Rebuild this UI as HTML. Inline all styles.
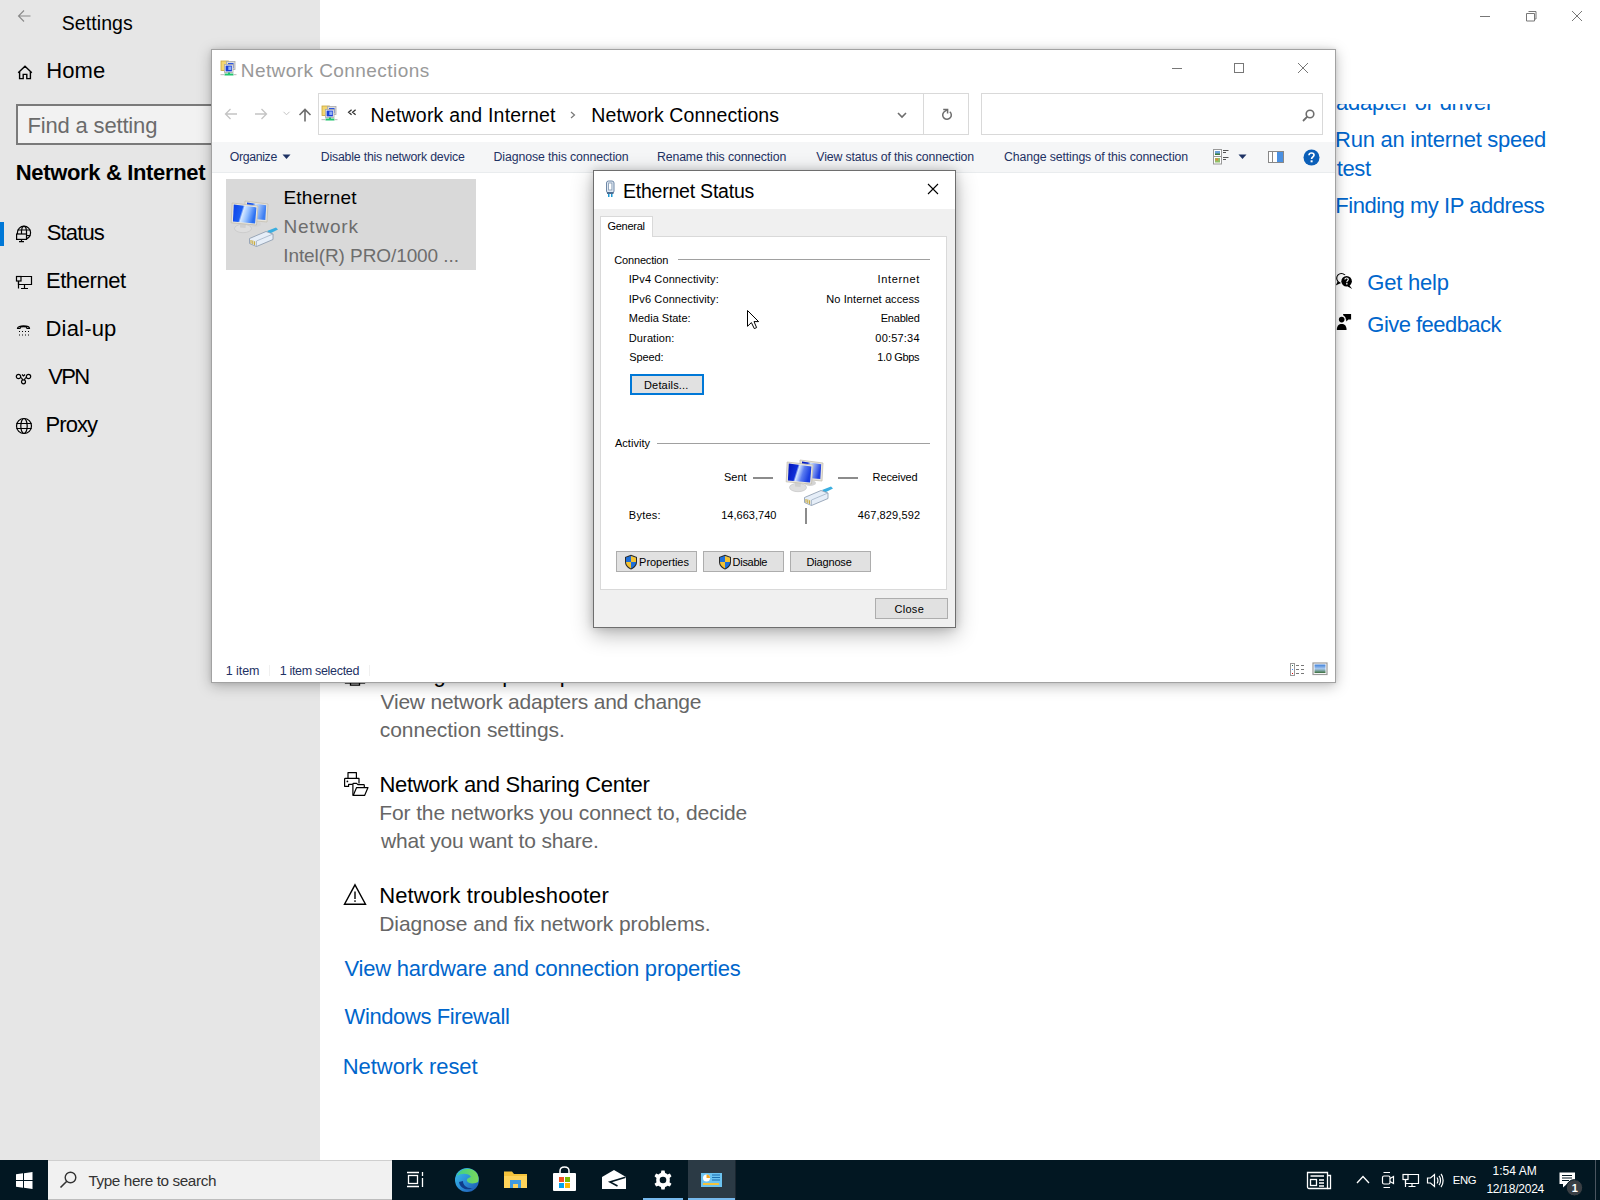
<!DOCTYPE html>
<html><head><meta charset="utf-8"><style>
html,body{margin:0;padding:0;}
body{width:1600px;height:1200px;position:relative;overflow:hidden;background:#fff;font-family:"Liberation Sans",sans-serif;color:#000;}
.t{position:absolute;white-space:nowrap;line-height:1;}
svg{overflow:visible;}
</style></head><body>
<div style="position:absolute;left:0px;top:0px;width:320px;height:1160px;background:#e6e6e6;"></div>
<div style="position:absolute;left:320px;top:0px;width:1280px;height:1160px;background:#fff;"></div>
<svg style="position:absolute;left:17px;top:9px;" width="15" height="14" viewBox="0 0 15 14"><path d="M13.5 7H1.5M7 1.5L1.5 7L7 12.5" fill="none" stroke="#8a8a8a" stroke-width="1.1"/></svg>
<div class="t" style="left:61.72px;top:14px;font-size:19.50px;letter-spacing:0.089px;">Settings</div>
<div style="position:absolute;left:1480px;top:16px;width:10px;height:1px;background:#777;"></div>
<svg style="position:absolute;left:1525px;top:10px;" width="13" height="13" viewBox="0 0 13 13"><path d="M3.5 1.5H11V9H9.5M1.5 3.5H9.5V11H1.5Z" fill="none" stroke="#777" stroke-width="1"/></svg>
<svg style="position:absolute;left:1571px;top:10px;" width="12" height="12" viewBox="0 0 12 12"><path d="M1 1L11 11M11 1L1 11" stroke="#777" stroke-width="1"/></svg>
<svg style="position:absolute;left:17px;top:65px;" width="16" height="15" viewBox="0 0 16 15"><path d="M1.2 7.8L8 1.2L14.8 7.8M2.6 6.6V13.6H6.2V9.4H9.8V13.6H13.4V6.6" fill="none" stroke="#000" stroke-width="1.4"/></svg>
<div class="t" style="left:46.30px;top:60px;font-size:22.00px;letter-spacing:0.099px;">Home</div>
<div style="position:absolute;left:16px;top:104px;width:300px;height:41px;background:#f2f2f2;border:2px solid #7a7a7a;box-sizing:border-box;"></div>
<div class="t" style="left:27.40px;top:115px;font-size:22.00px;letter-spacing:-0.158px;color:#6b6b6b;">Find a setting</div>
<div class="t" style="left:15.75px;top:162px;font-size:22.00px;letter-spacing:-0.345px;font-weight:bold;">Network &amp; Internet</div>
<div style="position:absolute;left:0px;top:222px;width:4px;height:24px;background:#0078d7;"></div>
<svg style="position:absolute;left:15px;top:225px;" width="17" height="18" viewBox="0 0 17 18"><g fill="none" stroke="#000" stroke-width="1.2"><circle cx="9" cy="7.8" r="6.6"/><path d="M6.8 5C6.8 2.3 7.6 1.4 9 1.4C10.4 1.4 11.2 2.3 11.2 5"/><path d="M2.6 5H15.4M11.5 5V14M11.5 10.5H15.2M6.5 5V9"/></g><rect x="1.6" y="9" width="9.9" height="5.4" fill="#e6e6e6" stroke="#000" stroke-width="1.2"/><path d="M6.5 14.4V16.5M4 16.6H9" stroke="#000" stroke-width="1.2"/></svg>
<div class="t" style="left:46.71px;top:222px;font-size:22.00px;letter-spacing:-0.858px;">Status</div>
<svg style="position:absolute;left:15px;top:275px;" width="18" height="15" viewBox="0 0 18 15"><g fill="none" stroke="#000" stroke-width="1.2"><path d="M6 1.5H16.5V9.5H3.5V6"/><rect x="1.5" y="1.5" width="4.5" height="4.5"/><path d="M3.5 6V13.5M9.5 9.5V13M6 13.5H13"/></g></svg>
<div class="t" style="left:45.90px;top:270px;font-size:22.00px;letter-spacing:-0.415px;">Ethernet</div>
<svg style="position:absolute;left:16px;top:323px;" width="15" height="14" viewBox="0 0 15 14"><g fill="none" stroke="#000" stroke-width="1.2"><path d="M1.5 5.5C1.5 2 13.5 2 13.5 5.5L11 5.5L10.5 4C8.5 3.4 6.5 3.4 4.5 4L4 5.5Z"/></g><g fill="#000"><rect x="3" y="8" width="1" height="1"/><rect x="6" y="8" width="1" height="1"/><rect x="9" y="8" width="1" height="1"/><rect x="12" y="8" width="1" height="1"/><rect x="3" y="11.5" width="1" height="1"/><rect x="6" y="11.5" width="1" height="1"/><rect x="9" y="11.5" width="1" height="1"/><rect x="12" y="11.5" width="1" height="1"/></g></svg>
<div class="t" style="left:45.50px;top:318px;font-size:22.00px;letter-spacing:0.185px;">Dial-up</div>
<svg style="position:absolute;left:15px;top:373px;" width="17" height="12" viewBox="0 0 17 12"><g fill="none" stroke="#000" stroke-width="1.2"><circle cx="3.5" cy="3.5" r="2.2"/><circle cx="13.5" cy="3.5" r="2.2"/><circle cx="8.5" cy="8.8" r="2"/><path d="M5.5 4.2C7 5 7.5 6 7.5 7M11.5 4.2C10 5 9.5 6 9.5 7M7 1.5L8.5 3L10 1.5"/></g></svg>
<div class="t" style="left:48.31px;top:366px;font-size:22.00px;letter-spacing:-1.731px;">VPN</div>
<svg style="position:absolute;left:15px;top:417px;" width="18" height="18" viewBox="0 0 18 18"><g fill="none" stroke="#000" stroke-width="1.2"><circle cx="9" cy="9" r="7.5"/><ellipse cx="9" cy="9" rx="3.2" ry="7.5"/><path d="M1.5 6.5H16.5M1.5 11.5H16.5"/></g></svg>
<div class="t" style="left:45.50px;top:414px;font-size:22.00px;letter-spacing:-0.921px;">Proxy</div>
<div style="position:absolute;left:1320px;top:104px;width:280px;height:16px;overflow:hidden;"><div class="t" style="left:16.08px;top:-12px;font-size:22.00px;letter-spacing:-0.259px;color:#0066cc;">adapter or driver</div>
</div>
<div class="t" style="left:1335.10px;top:129px;font-size:22.00px;letter-spacing:-0.268px;color:#0066cc;">Run an internet speed</div>
<div class="t" style="left:1336.67px;top:158px;font-size:22.00px;letter-spacing:-0.327px;color:#0066cc;">test</div>
<div class="t" style="left:1335.20px;top:195px;font-size:22.00px;letter-spacing:-0.444px;color:#0066cc;">Finding my IP address</div>
<svg style="position:absolute;left:1335px;top:272px;" width="19" height="19" viewBox="0 0 19 19"><circle cx="6.4" cy="6.2" r="4.7" fill="none" stroke="#000" stroke-width="1.1"/><path d="M0.8 13.6L2.6 9.6L5.2 11.2Z" fill="#000"/><circle cx="11.6" cy="9.2" r="6.4" fill="#fff"/><circle cx="11.6" cy="9.2" r="5.3" fill="#000"/><path d="M14.2 13L17.2 17L12.6 14.4Z" fill="#000"/><path d="M9.9 7.6C9.9 6.6 10.6 6 11.6 6C12.6 6 13.3 6.6 13.3 7.5C13.3 8.6 11.8 8.7 11.8 10.2" fill="none" stroke="#fff" stroke-width="1.2"/><rect x="11.1" y="11.1" width="1.4" height="1.4" fill="#fff"/></svg>
<div class="t" style="left:1367.30px;top:272px;font-size:22.00px;letter-spacing:-0.223px;color:#0066cc;">Get help</div>
<svg style="position:absolute;left:1335px;top:313px;" width="19" height="19" viewBox="0 0 19 19"><path d="M8 1.1H16.1V6.4H13.4L11.2 8.4V6.4H9.6Z" fill="#000"/><circle cx="6.7" cy="6.6" r="4.1" fill="#fff"/><circle cx="6.7" cy="6.6" r="2.8" fill="#000"/><path d="M1.8 17C1.8 12.6 4 11 6.7 11C9.4 11 11.6 12.6 11.6 17Z" fill="#000"/></svg>
<div class="t" style="left:1367.30px;top:314px;font-size:22.00px;letter-spacing:-0.533px;color:#0066cc;">Give feedback</div>
<svg style="position:absolute;left:344px;top:660px;" width="24" height="27" viewBox="0 0 24 27"><g fill="none" stroke="#000" stroke-width="1.3"><rect x="1.5" y="6" width="19" height="17"/><path d="M6.5 23V25.2H15.5V23"/></g></svg>
<div class="t" style="left:379.90px;top:664px;font-size:22.00px;letter-spacing:0.240px;">Change adapter options</div>
<div class="t" style="left:380.52px;top:691px;font-size:21.00px;letter-spacing:-0.215px;color:#666;">View network adapters and change</div>
<div class="t" style="left:379.72px;top:719px;font-size:21.00px;letter-spacing:-0.022px;color:#666;">connection settings.</div>
<svg style="position:absolute;left:343px;top:771px;" width="26" height="26" viewBox="0 0 26 26"><g fill="none" stroke="#000" stroke-width="1.2" stroke-linejoin="round"><path d="M5 7.4V1.6H13.4V7.4"/><path d="M6 15.3H1.6V8.2C1.6 7.7 1.9 7.4 2.4 7.4H16V12.6"/><path d="M5.6 15.8V13.3H9.8"/><path d="M9.9 24.4V13.2C9.9 12.8 10.2 12.4 10.6 12.4H13.6L14.9 13.6H20.6C21 13.6 21.3 13.9 21.3 14.3V16.4"/><path d="M10.2 24.4L13.6 16.6H25L21.6 24.4Z"/></g><circle cx="4.4" cy="10.4" r="0.9" fill="#000"/></svg>
<div class="t" style="left:379.40px;top:774px;font-size:22.00px;letter-spacing:-0.286px;">Network and Sharing Center</div>
<div class="t" style="left:379.28px;top:802px;font-size:21.00px;letter-spacing:-0.116px;color:#666;">For the networks you connect to, decide</div>
<div class="t" style="left:381.00px;top:830px;font-size:21.00px;letter-spacing:-0.179px;color:#666;">what you want to share.</div>
<svg style="position:absolute;left:343px;top:883px;" width="24" height="23" viewBox="0 0 24 23"><path d="M12 1.8L22.5 21.2H1.5Z" fill="none" stroke="#000" stroke-width="1.4" stroke-linejoin="miter"/><rect x="11.3" y="8.5" width="1.4" height="7.5" fill="#000"/><rect x="11.3" y="17.3" width="1.4" height="1.6" fill="#000"/></svg>
<div class="t" style="left:379.20px;top:885px;font-size:22.00px;letter-spacing:0.101px;">Network troubleshooter</div>
<div class="t" style="left:379.28px;top:913px;font-size:21.00px;letter-spacing:-0.076px;color:#666;">Diagnose and fix network problems.</div>
<div class="t" style="left:344.51px;top:958px;font-size:22.00px;letter-spacing:-0.214px;color:#0066cc;">View hardware and connection properties</div>
<div class="t" style="left:344.51px;top:1006px;font-size:22.00px;letter-spacing:-0.387px;color:#0066cc;">Windows Firewall</div>
<div class="t" style="left:342.80px;top:1056px;font-size:22.00px;letter-spacing:-0.072px;color:#0066cc;">Network reset</div>
<div style="position:absolute;left:211px;top:49px;width:1125px;height:634px;background:#fff;border:1px solid #a2a2a2;box-sizing:border-box;box-shadow:0 3px 13px rgba(0,0,0,0.26), 0 0 4px rgba(0,0,0,0.10);"></div>
<svg style="position:absolute;left:220px;top:60px;" width="17" height="16" viewBox="0 0 17 16"><rect x="1" y="1" width="7.5" height="9.5" fill="#f3d670" stroke="#c9a53a" stroke-width="0.8"/><rect x="6.5" y="1.5" width="8.5" height="8" fill="#dcdcdc" stroke="#a8a8a8" stroke-width="0.8"/><rect x="8" y="3" width="5.5" height="5" fill="#2c55e0"/><rect x="4.5" y="4.5" width="8.5" height="8" fill="#f4f4f4" stroke="#a8a8a8" stroke-width="0.8"/><rect x="5.6" y="5.6" width="6.3" height="5.8" fill="#1a3fd8"/><rect x="8.3" y="6.5" width="3" height="3.5" fill="#8fb0f5"/><rect x="8" y="12.5" width="2" height="1.5" fill="#1fbf6a"/><rect x="4.5" y="13.5" width="9" height="2" fill="#21c46e"/><rect x="0.5" y="14" width="4" height="1.2" fill="#c4c4c4"/><rect x="13.5" y="14" width="3" height="1.2" fill="#c4c4c4"/></svg>
<div class="t" style="left:240.74px;top:61px;font-size:19.00px;letter-spacing:0.437px;color:#999;">Network Connections</div>
<div style="position:absolute;left:1172px;top:68px;width:10px;height:1px;background:#777;"></div>
<svg style="position:absolute;left:1233px;top:62px;" width="12" height="12" viewBox="0 0 12 12"><rect x="1.5" y="1.5" width="9" height="9" fill="none" stroke="#777" stroke-width="1"/></svg>
<svg style="position:absolute;left:1297px;top:62px;" width="12" height="12" viewBox="0 0 12 12"><path d="M1 1L11 11M11 1L1 11" stroke="#777" stroke-width="1"/></svg>
<svg style="position:absolute;left:224px;top:108px;" width="14" height="12" viewBox="0 0 14 12"><path d="M13 6H1.5M6.5 1L1.5 6L6.5 11" fill="none" stroke="#c4c4c4" stroke-width="1.3"/></svg>
<svg style="position:absolute;left:254px;top:108px;" width="14" height="12" viewBox="0 0 14 12"><path d="M1 6H12.5M7.5 1L12.5 6L7.5 11" fill="none" stroke="#c4c4c4" stroke-width="1.3"/></svg>
<svg style="position:absolute;left:283px;top:111px;" width="7" height="5" viewBox="0 0 7 5"><path d="M0.5 0.8L3.5 3.8L6.5 0.8" fill="none" stroke="#c4c4c4" stroke-width="1"/></svg>
<svg style="position:absolute;left:298px;top:108px;" width="14" height="14" viewBox="0 0 14 14"><path d="M7 13.5V1.5M1.5 7L7 1.5L12.5 7" fill="none" stroke="#6d6d6d" stroke-width="1.6"/></svg>
<div style="position:absolute;left:318px;top:93px;width:651px;height:42px;border:1px solid #d9d9d9;box-sizing:border-box;"></div>
<div style="position:absolute;left:923px;top:93px;width:1px;height:42px;background:#d9d9d9;"></div>
<svg style="position:absolute;left:321px;top:105px;" width="17" height="16" viewBox="0 0 17 16"><rect x="1" y="1" width="7.5" height="9.5" fill="#f3d670" stroke="#c9a53a" stroke-width="0.8"/><rect x="6.5" y="1.5" width="8.5" height="8" fill="#dcdcdc" stroke="#a8a8a8" stroke-width="0.8"/><rect x="8" y="3" width="5.5" height="5" fill="#2c55e0"/><rect x="4.5" y="4.5" width="8.5" height="8" fill="#f4f4f4" stroke="#a8a8a8" stroke-width="0.8"/><rect x="5.6" y="5.6" width="6.3" height="5.8" fill="#1a3fd8"/><rect x="8.3" y="6.5" width="3" height="3.5" fill="#8fb0f5"/><rect x="8" y="12.5" width="2" height="1.5" fill="#1fbf6a"/><rect x="4.5" y="13.5" width="9" height="2" fill="#21c46e"/><rect x="0.5" y="14" width="4" height="1.2" fill="#c4c4c4"/><rect x="13.5" y="14" width="3" height="1.2" fill="#c4c4c4"/></svg>
<svg style="position:absolute;left:347px;top:109px;" width="10" height="7" viewBox="0 0 10 7"><path d="M4.6 0.8L1.6 3.3L4.6 5.8M8.6 0.8L5.6 3.3L8.6 5.8" fill="none" stroke="#333" stroke-width="1.3"/></svg>
<div class="t" style="left:370.60px;top:106px;font-size:19.50px;letter-spacing:0.206px;">Network and Internet</div>
<svg style="position:absolute;left:570px;top:111px;" width="6" height="8" viewBox="0 0 6 8"><path d="M1 1L4.5 4L1 7" fill="none" stroke="#777" stroke-width="1.2"/></svg>
<div class="t" style="left:591.30px;top:106px;font-size:19.50px;letter-spacing:0.137px;">Network Connections</div>
<svg style="position:absolute;left:897px;top:112px;" width="10" height="7" viewBox="0 0 10 7"><path d="M1 1L5 5L9 1" fill="none" stroke="#6d6d6d" stroke-width="1.6"/></svg>
<svg style="position:absolute;left:941px;top:108px;" width="13" height="13" viewBox="0 0 13 13"><path d="M8.76 3.71A4.3 4.3 0 1 1 2.96 3.96L6.3 1.6" fill="none" stroke="#6d6d6d" stroke-width="1.5"/><path d="M2.2 1.6H6.6V5.6" fill="none" stroke="#6d6d6d" stroke-width="1.5"/></svg>
<div style="position:absolute;left:981px;top:93px;width:342px;height:42px;border:1px solid #d9d9d9;box-sizing:border-box;"></div>
<svg style="position:absolute;left:1301px;top:108px;" width="15" height="15" viewBox="0 0 15 15"><circle cx="9" cy="6" r="3.8" fill="none" stroke="#6d6d6d" stroke-width="1.6"/><path d="M6.3 8.7L2 13" stroke="#6d6d6d" stroke-width="1.8"/></svg>
<div style="position:absolute;left:212px;top:142px;width:1123px;height:31px;background:#f5f6f7;border-bottom:1px solid #e9ecee;box-sizing:border-box;"></div>
<div class="t" style="left:229.82px;top:151px;font-size:12.30px;letter-spacing:-0.355px;color:#1e3264;">Organize</div>
<svg style="position:absolute;left:282px;top:154px;" width="9" height="6" viewBox="0 0 9 6"><path d="M0.5 0.5H8.5L4.5 5Z" fill="#1e3264"/></svg>
<div class="t" style="left:320.79px;top:151px;font-size:12.30px;letter-spacing:-0.192px;color:#1e3264;">Disable this network device</div>
<div class="t" style="left:493.59px;top:151px;font-size:12.30px;letter-spacing:-0.102px;color:#1e3264;">Diagnose this connection</div>
<div class="t" style="left:656.99px;top:151px;font-size:12.30px;letter-spacing:-0.127px;color:#1e3264;">Rename this connection</div>
<div class="t" style="left:816.35px;top:151px;font-size:12.30px;letter-spacing:-0.141px;color:#1e3264;">View status of this connection</div>
<div class="t" style="left:1004.09px;top:151px;font-size:12.30px;letter-spacing:-0.122px;color:#1e3264;">Change settings of this connection</div>
<svg style="position:absolute;left:1212px;top:148px;" width="18" height="17" viewBox="0 0 18 17"><rect x="1.5" y="1.5" width="8" height="7" fill="#fff" stroke="#999" stroke-width="1"/><rect x="1.5" y="8.5" width="8" height="7.5" fill="#fff" stroke="#999" stroke-width="1"/><rect x="3" y="3" width="5" height="4" fill="#6fa3d8"/><rect x="3" y="5.5" width="5" height="1.5" fill="#3c7a3c"/><rect x="3" y="10" width="5" height="4.5" fill="#8fc06a"/><rect x="3.5" y="10.5" width="2.5" height="2" fill="#e08a3a"/><path d="M11 2.5H16.5M11 4.5H14M11 9.5H16.5M11 11.5H14" stroke="#555" stroke-width="1"/></svg>
<svg style="position:absolute;left:1238px;top:154px;" width="9" height="6" viewBox="0 0 9 6"><path d="M0.5 0.5H8.5L4.5 5Z" fill="#1e3264"/></svg>
<svg style="position:absolute;left:1267px;top:150px;" width="18" height="14" viewBox="0 0 18 14"><rect x="1.5" y="1.5" width="15" height="11" fill="#fff" stroke="#888" stroke-width="1"/><rect x="10" y="2" width="6" height="10" fill="#4a90e2"/><path d="M5.5 2V12" stroke="#888" stroke-width="1"/></svg>
<svg style="position:absolute;left:1303px;top:149px;" width="17" height="17" viewBox="0 0 17 17"><circle cx="8.5" cy="8.5" r="8" fill="#0b5fb8"/><path d="M6 6.3C6 4.8 7.1 4 8.5 4C10 4 11 4.9 11 6.1C11 7.8 8.6 7.9 8.6 10" fill="none" stroke="#fff" stroke-width="1.7"/><rect x="7.6" y="11.3" width="2" height="2" fill="#fff"/></svg>
<div style="position:absolute;left:226px;top:179px;width:250px;height:91px;background:#d9d9d9;"></div>
<svg style="position:absolute;left:230px;top:199px;" width="48" height="46" viewBox="0 0 48 46"><defs><linearGradient id="scr" x1="0" y1="0" x2="1" y2="0.25"><stop offset="0" stop-color="#0b3fe8"/><stop offset="0.42" stop-color="#1d5ff2"/><stop offset="0.5" stop-color="#d6e8ff"/><stop offset="0.72" stop-color="#8fbcff"/><stop offset="1" stop-color="#2a6ff2"/></linearGradient>
<linearGradient id="scrb" x1="0" y1="0" x2="1" y2="0.25"><stop offset="0" stop-color="#0b3fe8"/><stop offset="0.3" stop-color="#1d5ff2"/><stop offset="0.45" stop-color="#d0e4ff"/><stop offset="1" stop-color="#3d7ef2"/></linearGradient></defs>
<ellipse cx="25" cy="25" rx="6" ry="3" fill="#d4d4d4"/>
<path d="M15 2L38 5L37 23L15 21Z" fill="#e7e4dc" stroke="#c5c0b3" stroke-width="0.8"/>
<path d="M17 3.6L36.2 6.2L35.3 21L17 19.4Z" fill="url(#scrb)"/>
<ellipse cx="13" cy="29.5" rx="8.5" ry="4.2" fill="#dedede" stroke="#c6c6c6" stroke-width="0.7"/>
<path d="M10 24L16 24.8L15.5 29L10 28.5Z" fill="#cfcfcf"/>
<path d="M2.2 4L28 7L26.5 26L1.2 23.8Z" fill="#ebe8df" stroke="#c2bdb0" stroke-width="0.8"/>
<path d="M3.8 5.6L26.4 8.4L25.1 24.4L2.9 22.4Z" fill="url(#scr)"/>
<path d="M37 32L46 28.5L48 30.5L40 34.5Z" fill="#3aaee0"/>
<path d="M19.5 39.5L36 32.5L43 35L43 40.5L26.5 47.5L19.5 44.5Z" fill="#e6eef8" stroke="#8797ab" stroke-width="0.8"/>
<path d="M26.5 42V47.5M26.5 42L43 35" fill="none" stroke="#9aabbf" stroke-width="0.7"/>
<path d="M21 41V44.5M22.8 41.6V45.2M24.6 42.2V46" stroke="#c9a93a" stroke-width="1.1"/></svg>
<div class="t" style="left:283.44px;top:188px;font-size:19.00px;letter-spacing:0.196px;">Ethernet</div>
<div class="t" style="left:283.44px;top:217px;font-size:19.00px;letter-spacing:0.805px;color:#6d6d6d;">Network</div>
<div class="t" style="left:283.25px;top:246px;font-size:19.00px;letter-spacing:-0.086px;color:#6d6d6d;">Intel(R) PRO/1000 ...</div>
<div class="t" style="left:225.85px;top:665px;font-size:12.50px;letter-spacing:-0.095px;color:#1e3264;">1 item</div>
<div style="position:absolute;left:269px;top:665px;width:1px;height:11px;background:#f0f0f0;"></div>
<div class="t" style="left:279.65px;top:665px;font-size:12.50px;letter-spacing:-0.308px;color:#1e3264;">1 item selected</div>
<div style="position:absolute;left:369px;top:665px;width:1px;height:11px;background:#f0f0f0;"></div>
<svg style="position:absolute;left:1289px;top:662px;" width="19" height="16" viewBox="0 0 19 16"><rect x="1.5" y="1.5" width="4" height="12" fill="#fff" stroke="#999" stroke-width="1"/><rect x="3" y="3" width="1" height="1" fill="#2d6a4f"/><rect x="3" y="7" width="1" height="1" fill="#3a86ff"/><rect x="3" y="11" width="1" height="1" fill="#d00"/><path d="M7 3.5H10M12 3.5H15M7 7.5H10M12 7.5H15M7 11.5H10M12 11.5H15" stroke="#777" stroke-width="1"/></svg>
<svg style="position:absolute;left:1312px;top:662px;" width="16" height="14" viewBox="0 0 16 14"><rect x="1" y="1" width="14" height="11.5" fill="#fff" stroke="#999" stroke-width="1.2"/><defs><linearGradient id="pic" x1="0" y1="0" x2="0" y2="1"><stop offset="0" stop-color="#3d7fd9"/><stop offset="0.5" stop-color="#a9c9ee"/><stop offset="1" stop-color="#3b6f3b"/></linearGradient></defs><rect x="2.5" y="2.5" width="11" height="8.5" fill="url(#pic)"/></svg>
<div style="position:absolute;left:593px;top:170px;width:363px;height:458px;background:#f0f0f0;border:1px solid #6e6e6e;box-sizing:border-box;box-shadow:0 6px 20px rgba(0,0,0,0.30), 0 0 8px rgba(0,0,0,0.15);"></div>
<div style="position:absolute;left:594px;top:171px;width:361px;height:38px;background:#fff;"></div>
<svg style="position:absolute;left:604px;top:180px;" width="12" height="18" viewBox="0 0 12 18"><rect x="2.5" y="1" width="7.5" height="12" rx="2" fill="#dfe8f3" stroke="#6d87a6" stroke-width="1"/><rect x="4.6" y="3" width="3.3" height="7" fill="#fff" stroke="#7d93ad" stroke-width="0.8"/><rect x="3" y="12" width="6.5" height="2" fill="#4e6f93"/><rect x="4" y="14" width="1.5" height="3" fill="#1e9ad6"/><rect x="7" y="14" width="1.5" height="3" fill="#1e9ad6"/></svg>
<div class="t" style="left:622.90px;top:182px;font-size:19.50px;letter-spacing:-0.215px;">Ethernet Status</div>
<svg style="position:absolute;left:927px;top:183px;" width="12" height="12" viewBox="0 0 12 12"><path d="M1 1L11 11M11 1L1 11" stroke="#000" stroke-width="1.1"/></svg>
<div style="position:absolute;left:594px;top:209px;width:361px;height:1px;background:#f0f0f0;"></div>
<div style="position:absolute;left:600px;top:236px;width:347px;height:354px;background:#fff;border:1px solid #d9d9d9;box-sizing:border-box;"></div>
<div style="position:absolute;left:600px;top:216px;width:53px;height:21px;background:#fff;border:1px solid #d9d9d9;border-bottom:none;box-sizing:border-box;"></div>
<div class="t" style="left:607.45px;top:221px;font-size:11.00px;letter-spacing:-0.259px;">General</div>
<div class="t" style="left:614.35px;top:255px;font-size:11.00px;letter-spacing:-0.177px;">Connection</div>
<div style="position:absolute;left:678px;top:259px;width:252px;height:1px;background:#a0a0a0;"></div>
<div class="t" style="left:628.69px;top:274px;font-size:11.00px;letter-spacing:0.116px;">IPv4 Connectivity:</div>
<div class="t" style="left:877.49px;top:274px;font-size:11.00px;letter-spacing:0.641px;">Internet</div>
<div class="t" style="left:628.69px;top:294px;font-size:11.00px;letter-spacing:0.116px;">IPv6 Connectivity:</div>
<div class="t" style="left:826.30px;top:294px;font-size:11.00px;letter-spacing:0.094px;">No Internet access</div>
<div class="t" style="left:628.80px;top:313px;font-size:11.00px;">Media State:</div>
<div class="t" style="left:880.70px;top:313px;font-size:11.00px;letter-spacing:-0.194px;">Enabled</div>
<div class="t" style="left:628.80px;top:333px;font-size:11.00px;letter-spacing:0.121px;">Duration:</div>
<div class="t" style="left:875.37px;top:333px;font-size:11.00px;letter-spacing:0.191px;">00:57:34</div>
<div class="t" style="left:629.21px;top:352px;font-size:11.00px;letter-spacing:-0.095px;">Speed:</div>
<div class="t" style="left:877.16px;top:352px;font-size:11.00px;letter-spacing:-0.315px;">1.0 Gbps</div>
<div style="position:absolute;left:630px;top:374px;width:74px;height:21px;background:#e1e1e1;border:2px solid #0078d7;box-sizing:border-box;"></div>
<div class="t" style="left:644.00px;top:380px;font-size:11.00px;letter-spacing:0.168px;">Details...</div>
<div class="t" style="left:614.88px;top:438px;font-size:11.00px;letter-spacing:0.044px;">Activity</div>
<div style="position:absolute;left:657px;top:443px;width:273px;height:1px;background:#a0a0a0;"></div>
<div class="t" style="left:724.00px;top:472px;font-size:11.00px;letter-spacing:-0.018px;">Sent</div>
<div style="position:absolute;left:753px;top:477px;width:20px;height:2px;background:#8c8c8c;"></div>
<div style="position:absolute;left:838px;top:477px;width:20px;height:2px;background:#8c8c8c;"></div>
<div class="t" style="left:872.60px;top:472px;font-size:11.00px;letter-spacing:-0.108px;">Received</div>
<svg style="position:absolute;left:785px;top:458px;transform-origin:0 0;" width="48" height="46" viewBox="0 0 48 46"><defs><linearGradient id="scr2" x1="0" y1="0" x2="1" y2="0.25"><stop offset="0" stop-color="#0012b8"/><stop offset="0.42" stop-color="#1030d8"/><stop offset="0.5" stop-color="#d6e8ff"/><stop offset="0.72" stop-color="#5a7cf0"/><stop offset="1" stop-color="#1a3ee0"/></linearGradient>
<linearGradient id="scrb2" x1="0" y1="0" x2="1" y2="0.25"><stop offset="0" stop-color="#0012b8"/><stop offset="0.3" stop-color="#1030d8"/><stop offset="0.45" stop-color="#d0e4ff"/><stop offset="1" stop-color="#2040e0"/></linearGradient></defs>
<ellipse cx="25" cy="25" rx="6" ry="3" fill="#d4d4d4"/>
<path d="M15 2L38 5L37 23L15 21Z" fill="#e7e4dc" stroke="#c5c0b3" stroke-width="0.8"/>
<path d="M17 3.6L36.2 6.2L35.3 21L17 19.4Z" fill="url(#scrb2)"/>
<ellipse cx="13" cy="29.5" rx="8.5" ry="4.2" fill="#dedede" stroke="#c6c6c6" stroke-width="0.7"/>
<path d="M10 24L16 24.8L15.5 29L10 28.5Z" fill="#cfcfcf"/>
<path d="M2.2 4L28 7L26.5 26L1.2 23.8Z" fill="#ebe8df" stroke="#c2bdb0" stroke-width="0.8"/>
<path d="M3.8 5.6L26.4 8.4L25.1 24.4L2.9 22.4Z" fill="url(#scr2)"/>
<path d="M37 32L46 28.5L48 30.5L40 34.5Z" fill="#3aaee0"/>
<path d="M19.5 39.5L36 32.5L43 35L43 40.5L26.5 47.5L19.5 44.5Z" fill="#e6eef8" stroke="#8797ab" stroke-width="0.8"/>
<path d="M26.5 42V47.5M26.5 42L43 35" fill="none" stroke="#9aabbf" stroke-width="0.7"/>
<path d="M21 41V44.5M22.8 41.6V45.2M24.6 42.2V46" stroke="#c9a93a" stroke-width="1.1"/></svg>
<div class="t" style="left:628.80px;top:510px;font-size:11.00px;letter-spacing:0.247px;">Bytes:</div>
<div class="t" style="left:721.16px;top:510px;font-size:11.00px;letter-spacing:0.022px;">14,663,740</div>
<div style="position:absolute;left:805px;top:508px;width:2px;height:16px;background:#8c8c8c;"></div>
<div class="t" style="left:857.76px;top:510px;font-size:11.00px;letter-spacing:0.112px;">467,829,592</div>
<div style="position:absolute;left:616px;top:551px;width:81px;height:21px;background:#e1e1e1;border:1px solid #adadad;box-sizing:border-box;"></div>
<svg style="position:absolute;left:623.5px;top:553.5px;" width="14" height="16" viewBox="0 0 14 16"><path d="M7 0.8L13 3V8C13 11.5 10.5 14 7 15.5C3.5 14 1 11.5 1 8V3Z" fill="#2a2a2a"/><path d="M7 2L12 3.8V8C12 11 9.8 13.2 7 14.4V8H2V3.8Z" fill="#1e6fd9"/><path d="M7 2V8H2V3.8Z" fill="#1e6fd9"/><path d="M7 2L12 3.8V8H7Z" fill="#f4c230"/><path d="M2 8H7V14.4C4.2 13.2 2 11 2 8Z" fill="#f4c230"/></svg>
<div class="t" style="left:639.10px;top:557px;font-size:11.00px;letter-spacing:-0.038px;">Properties</div>
<div style="position:absolute;left:703px;top:551px;width:81px;height:21px;background:#e1e1e1;border:1px solid #adadad;box-sizing:border-box;"></div>
<svg style="position:absolute;left:717.8px;top:553.5px;" width="14" height="16" viewBox="0 0 14 16"><path d="M7 0.8L13 3V8C13 11.5 10.5 14 7 15.5C3.5 14 1 11.5 1 8V3Z" fill="#2a2a2a"/><path d="M7 2L12 3.8V8C12 11 9.8 13.2 7 14.4V8H2V3.8Z" fill="#1e6fd9"/><path d="M7 2V8H2V3.8Z" fill="#1e6fd9"/><path d="M7 2L12 3.8V8H7Z" fill="#f4c230"/><path d="M2 8H7V14.4C4.2 13.2 2 11 2 8Z" fill="#f4c230"/></svg>
<div class="t" style="left:732.60px;top:557px;font-size:11.00px;letter-spacing:-0.300px;">Disable</div>
<div style="position:absolute;left:790px;top:551px;width:81px;height:21px;background:#e1e1e1;border:1px solid #adadad;box-sizing:border-box;"></div>
<div class="t" style="left:806.50px;top:557px;font-size:11.00px;letter-spacing:-0.170px;">Diagnose</div>
<div style="position:absolute;left:875px;top:598px;width:73px;height:21px;background:#e1e1e1;border:1px solid #adadad;box-sizing:border-box;"></div>
<div class="t" style="left:894.45px;top:604px;font-size:11.00px;letter-spacing:0.302px;">Close</div>
<svg style="position:absolute;left:746px;top:309px;" width="15" height="22" viewBox="0 0 15 22"><path d="M1.5 1.5V17.3L5.4 13.6L8.3 19.6L10.6 18.6L8 12.6H12.6Z" fill="#fff" stroke="#000" stroke-width="1" stroke-linejoin="round"/></svg>
<div style="position:absolute;left:0px;top:1160px;width:1600px;height:40px;background:#021722;"></div>
<svg style="position:absolute;left:16px;top:1172px;" width="17" height="17" viewBox="0 0 17 17"><path d="M0 2.3L7 1.3V8H0ZM8 1.2L16.5 0V8H8ZM0 9H7V15.7L0 14.7ZM8 9H16.5V17L8 15.8Z" fill="#fff"/></svg>
<div style="position:absolute;left:48px;top:1160px;width:344px;height:40px;background:#f1f1f1;border-top:1px solid #cfcfcf;border-bottom:1px solid #bdbdbd;box-sizing:border-box;"></div>
<svg style="position:absolute;left:59px;top:1171px;" width="19" height="18" viewBox="0 0 19 18"><circle cx="11.5" cy="6.5" r="5.3" fill="none" stroke="#333" stroke-width="1.4"/><path d="M7.8 10.2L1.5 16.5" stroke="#333" stroke-width="1.6"/></svg>
<div class="t" style="left:88.41px;top:1173px;font-size:15.30px;letter-spacing:-0.400px;color:#333;">Type here to search</div>
<svg style="position:absolute;left:406px;top:1171px;" width="20" height="17" viewBox="0 0 20 17"><g fill="none" stroke="#fff" stroke-width="1.3"><rect x="2.5" y="4.5" width="9" height="8"/><path d="M1 1.5H13M1 15.5H13M16.5 1V5M16.5 7V16"/></g></svg>
<svg style="position:absolute;left:454px;top:1167px;" width="26" height="26" viewBox="0 0 26 26"><defs><linearGradient id="edg" x1="0" y1="0" x2="1" y2="1"><stop offset="0" stop-color="#39c4e8"/><stop offset="0.5" stop-color="#2b8fd8"/><stop offset="1" stop-color="#1b4fa8"/></linearGradient><linearGradient id="edg2" x1="0" y1="0" x2="1" y2="0"><stop offset="0" stop-color="#3dd08a"/><stop offset="1" stop-color="#7ad95a"/></linearGradient></defs><circle cx="13" cy="13" r="12" fill="url(#edg)"/><path d="M3 9C5 3 13 0 19 3C24 5.5 25.5 11 24 15C21 17 14 17 13 14C12 11 17 10 17 10C15 6 7 6 3 9Z" fill="url(#edg2)"/><path d="M9 14C9 19 14 22 19 21C14 24 6 22 5 15Z" fill="#0f3c8a"/></svg>
<svg style="position:absolute;left:503px;top:1170px;" width="25" height="20" viewBox="0 0 25 20"><path d="M1 1.5H9L11 4H24V18H1Z" fill="#f5c33b"/><path d="M1 6H24V18H1Z" fill="#ffd45a"/><rect x="7" y="10" width="11" height="4" fill="#3f9ae0"/><rect x="7" y="13" width="3" height="5" fill="#3f9ae0"/><rect x="15" y="13" width="3" height="5" fill="#3f9ae0"/></svg>
<svg style="position:absolute;left:552px;top:1166px;" width="25" height="26" viewBox="0 0 25 26"><path d="M8 7V5C8 2 10 1 12.5 1C15 1 17 2 17 5V7" fill="none" stroke="#fff" stroke-width="1.5"/><rect x="1" y="7" width="23" height="18" rx="1" fill="#fff"/><rect x="7" y="11" width="5" height="5" fill="#f25022"/><rect x="13" y="11" width="5" height="5" fill="#7fba00"/><rect x="7" y="17" width="5" height="5" fill="#00a4ef"/><rect x="13" y="17" width="5" height="5" fill="#ffb900"/></svg>
<svg style="position:absolute;left:601px;top:1169px;" width="26" height="21" viewBox="0 0 26 21"><path d="M1 8L13 1L25 8V20H1Z" fill="#fff"/><path d="M24.5 8.2L9 13L16.5 17" fill="none" stroke="#021722" stroke-width="1.6" stroke-linejoin="miter"/></svg>
<svg style="position:absolute;left:653px;top:1170px;" width="20" height="20" viewBox="0 0 20 20"><g transform="translate(10,10)"><path d="M-1.6 -9.5H1.6L2.1 -7C3 -6.7 3.8 -6.2 4.5 -5.6L6.9 -6.5L8.5 -3.7L6.6 -2C6.8 -1.3 6.8 -0.5 6.8 0.3V0C6.8 0.8 6.7 1.5 6.5 2.2L8.5 3.8L6.9 6.6L4.5 5.7C3.8 6.3 3 6.8 2.1 7.1L1.6 9.5H-1.6L-2.1 7.1C-3 6.8 -3.8 6.3 -4.5 5.7L-6.9 6.6L-8.5 3.8L-6.5 2.2C-6.7 1.5 -6.8 0.8 -6.8 0C-6.8 -0.7 -6.7 -1.4 -6.5 -2.1L-8.5 -3.7L-6.9 -6.5L-4.5 -5.6C-3.8 -6.2 -3 -6.7 -2.1 -7Z" fill="#fff"/><circle r="3.3" fill="#021722"/></g></svg>
<div style="position:absolute;left:643px;top:1198px;width:40px;height:2px;background:#76b9ed;"></div>
<div style="position:absolute;left:688px;top:1160px;width:48px;height:40px;background:#2b3a45;"></div>
<div style="position:absolute;left:688px;top:1198px;width:48px;height:2px;background:#76b9ed;"></div>
<div style="position:absolute;left:735px;top:1160px;width:1px;height:40px;background:#1a2630;"></div>
<svg style="position:absolute;left:700px;top:1172px;" width="23" height="16" viewBox="0 0 23 16"><rect x="1" y="1" width="21" height="14" fill="#6cc3f0"/><circle cx="6.5" cy="6" r="3.5" fill="#fff"/><path d="M6.5 6V2.5A3.5 3.5 0 0 1 10 6Z" fill="#f5a623"/><path d="M12 3H20M12 5.5H20M12 8H20" stroke="#1b6fb0" stroke-width="1.2"/><rect x="3" y="11" width="16" height="2" fill="#f5c33b"/></svg>
<svg style="position:absolute;left:1306px;top:1171px;" width="26" height="19" viewBox="0 0 26 19"><g fill="none" stroke="#fff" stroke-width="1.3"><path d="M1.5 1.5H21.5V17.5H3A1.5 1.5 0 0 1 1.5 16Z"/><path d="M21.5 4.5H24.5V17.5H21.5"/><rect x="4.5" y="8.5" width="6" height="6"/><path d="M4.5 5H18M13 9H18M13 12H18M13 15H18"/></g></svg>
<svg style="position:absolute;left:1356px;top:1175px;" width="14" height="9" viewBox="0 0 14 9"><path d="M1 8L7 1.5L13 8" fill="none" stroke="#fff" stroke-width="1.3"/></svg>
<svg style="position:absolute;left:1381px;top:1171px;" width="14" height="18" viewBox="0 0 14 18"><g fill="none" stroke="#fff" stroke-width="1.2"><rect x="1.5" y="5" width="7.5" height="8" rx="1.5"/><path d="M9 7.5L12.5 5.5V12.5L9 10.5"/><path d="M2.5 1.5H9M2.5 16.5H9"/></g></svg>
<svg style="position:absolute;left:1402px;top:1173px;" width="18" height="15" viewBox="0 0 18 15"><g fill="none" stroke="#fff" stroke-width="1.2"><path d="M6 1.5H16.5V10.5H3.5V6.5"/><rect x="1" y="1.5" width="5" height="5"/><path d="M3.5 6.5V14M10 10.5V13.5M6.5 13.5H13.5"/></g></svg>
<svg style="position:absolute;left:1426px;top:1173px;" width="18" height="15" viewBox="0 0 18 15"><g fill="none" stroke="#fff" stroke-width="1.2"><path d="M1.5 5H4.5L8.5 1.5V13.5L4.5 10H1.5Z"/><path d="M11 4.5C12.2 6 12.2 9 11 10.5M13 2.8C15 5 15 10 13 12.2M15 1C17.8 4 17.8 11 15 14"/></g></svg>
<div class="t" style="left:1452.87px;top:1175px;font-size:11.30px;letter-spacing:-0.412px;color:#fff;">ENG</div>
<div class="t" style="left:1492.59px;top:1165px;font-size:12.00px;letter-spacing:0.011px;color:#fff;">1:54 AM</div>
<div class="t" style="left:1486.39px;top:1183px;font-size:12.00px;letter-spacing:-0.244px;color:#fff;">12/18/2024</div>
<svg style="position:absolute;left:1558px;top:1171px;" width="27" height="26" viewBox="0 0 27 26"><path d="M1.5 1.5H17V13H9L5 16.5V13H1.5Z" fill="#fff"/><path d="M4 4.5H14M4 7H14M4 9.5H11" stroke="#021722" stroke-width="1"/><circle cx="16.5" cy="16.8" r="8.2" fill="#3a3f44" stroke="#021722" stroke-width="1"/></svg>
<div class="t" style="left:1571.82px;top:1183px;font-size:11.00px;color:#fff;font-weight:bold;">1</div>
<div style="position:absolute;left:1595px;top:1160px;width:1px;height:40px;background:#4a5560;"></div>
</body></html>
